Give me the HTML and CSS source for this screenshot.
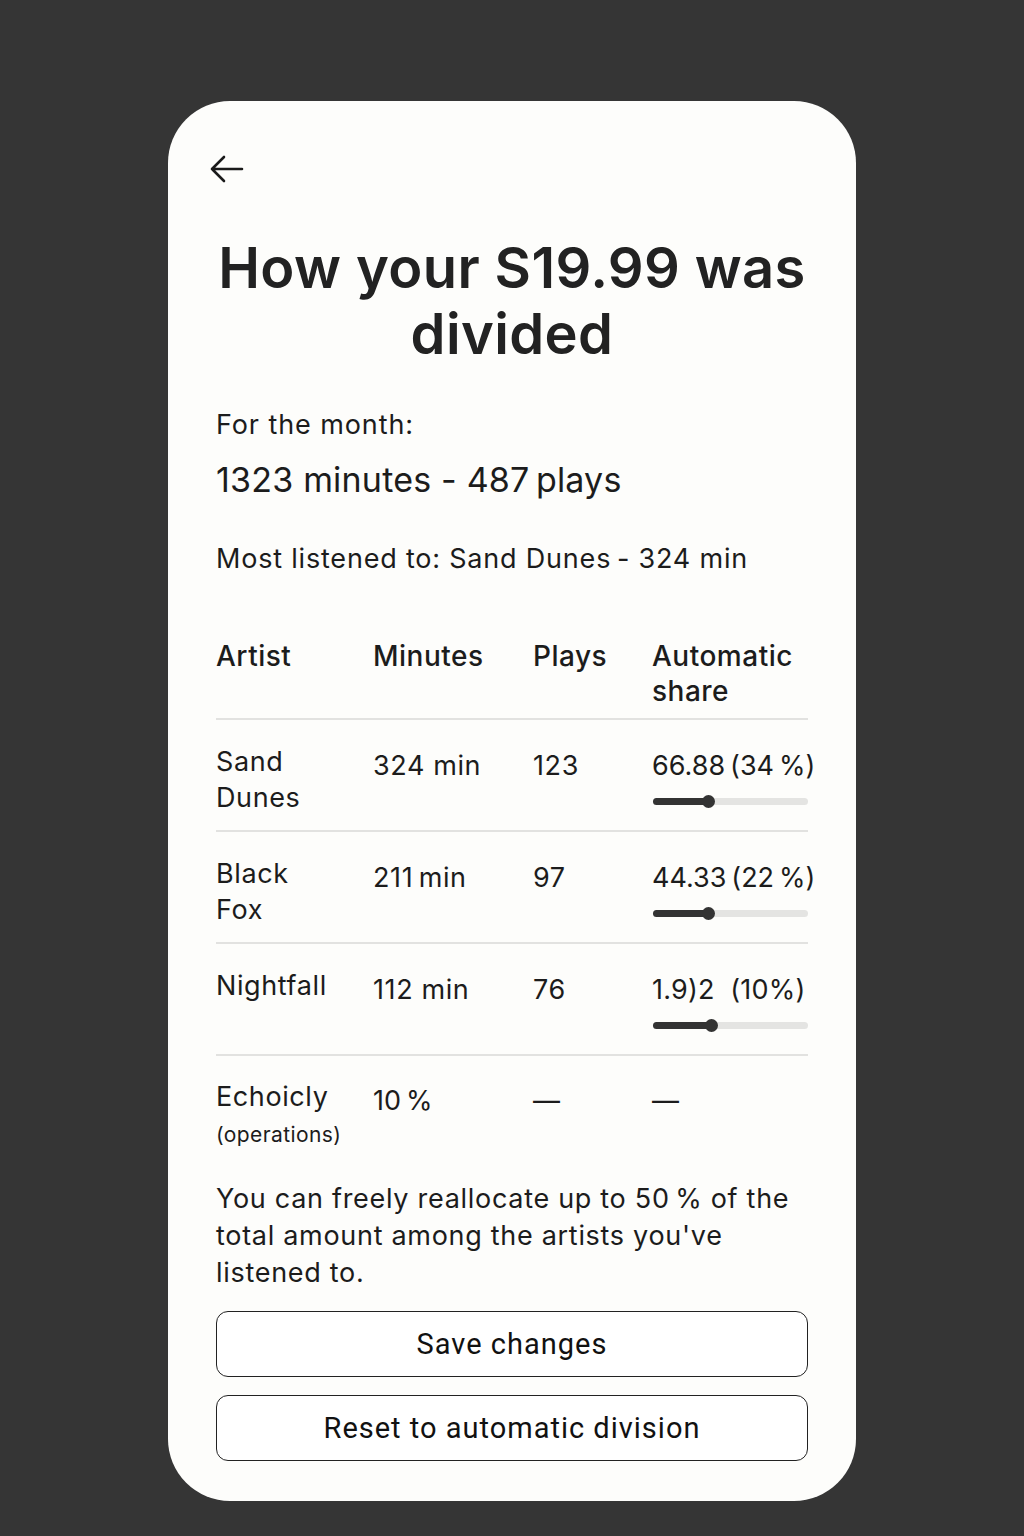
FILE: index.html
```html
<!DOCTYPE html>
<html lang="en">
<head>
<meta charset="utf-8">
<title>How your S19.99 was divided</title>
<link rel="stylesheet" href="styles.css">
</head>
<body>
<main class="card">
  <button class="back" aria-label="Back">
    <svg width="36" height="32" viewBox="0 0 36 32"><path d="M34 16H4M16 4L4 16l12 12" fill="none" stroke="#1a1a1a" stroke-width="2.6" stroke-linecap="round" stroke-linejoin="round"/></svg>
  </button>
  <h1 class="title">How your S19.99 was divided</h1>
  <p class="label">For the month:</p>
  <p class="totals">1323 minutes - 487&#8239;plays</p>
  <p class="most">Most listened to: Sand Dunes&#8239;- 324 min</p>

  <div class="table">
    <div class="row head">
      <div>Artist</div><div>Minutes</div><div>Plays</div><div>Automatic share</div>
    </div>
    <div class="row">
      <div class="name">Sand<br>Dunes</div>
      <div class="val">324 min</div>
      <div class="val">123</div>
      <div class="share">
        <div class="val tight">66.88&#8239;(34&#8239;%)</div>
        <div class="slider"><div class="fill" style="width:55px"></div><div class="thumb" style="left:55px"></div></div>
      </div>
    </div>
    <div class="row">
      <div class="name">Black<br>Fox</div>
      <div class="val">211&#8239;min</div>
      <div class="val">97</div>
      <div class="share">
        <div class="val tight">44.33&#8239;(22&#8239;%)</div>
        <div class="slider"><div class="fill" style="width:55px"></div><div class="thumb" style="left:55px"></div></div>
      </div>
    </div>
    <div class="row">
      <div class="name">Nightfall</div>
      <div class="val">112 min</div>
      <div class="val">76</div>
      <div class="share">
        <div class="val tight">1.9)2&nbsp; (10%)</div>
        <div class="slider"><div class="fill" style="width:58px"></div><div class="thumb" style="left:58px"></div></div>
      </div>
    </div>
    <div class="row last">
      <div class="name">Echoicly<br><span class="sub">(operations)</span></div>
      <div class="val">10&#8239;%</div>
      <div class="val">—</div>
      <div class="val">—</div>
    </div>
  </div>

  <p class="note">You can freely reallocate up to 50&#8239;% of the total amount among the artists you've listened to.</p>

  <div class="actions">
    <button class="btn">Save changes</button>
    <button class="btn">Reset to automatic division</button>
  </div>
</main>
</body>
</html>
```

FILE: styles.css
```css
* { box-sizing: border-box; }
html, body { margin: 0; padding: 0; }
body {
  background: #353535;
  width: 1024px;
  height: 1536px;
  font-family: Inter, "Noto Sans", sans-serif;
  color: #1c1c1c;
  overflow: hidden;
}
.card {
  width: 688px;
  height: 1400px;
  margin: 101px auto 0;
  background: #fdfdfb;
  border-radius: 62px;
  padding: 52px 48px 40px;
  display: flex;
  flex-direction: column;
}
.back {
  border: 0;
  background: none;
  padding: 0;
  margin-left: -8px;
  width: 36px;
  height: 32px;
  display: block;
}
.title {
  margin: 50px 0 0;
  text-align: center;
  font-size: 56px;
  line-height: 66px;
  font-weight: 600;
  letter-spacing: 0.4px;
  color: #222;
}
.label {
  margin: 41px 0 0;
  font-size: 27px;
  line-height: 34px;
  letter-spacing: 0.9px;
}
.totals {
  margin: 18px 0 0;
  font-size: 34px;
  line-height: 40px;
  letter-spacing: 0.2px;
}
.most {
  margin: 42px 0 0;
  font-size: 27px;
  line-height: 34px;
  letter-spacing: 0.8px;
}
.table { margin-top: 63px; }
.row {
  display: grid;
  grid-template-columns: 157px 160px 119px 156px;
  border-bottom: 2px solid #e2e2e0;
  height: 112px;
  padding-top: 24px;
  font-size: 27px;
  line-height: 36px;
  letter-spacing: 0.6px;
}
.row.head {
  height: auto;
  padding: 0 0 9px;
  font-size: 28px;
  font-weight: 500;
  line-height: 35px;
  letter-spacing: 0.5px;
}
.row.last { border-bottom: 0; height: auto; padding-top: 23px; }
.val { padding-top: 4px; white-space: nowrap; }
.val.tight { letter-spacing: 0.2px; }
.sub { font-size: 21px; line-height: 28px; letter-spacing: 0.4px; }
.slider {
  position: relative;
  height: 7px;
  width: 155px;
  margin: 14px 0 0 1px;
  background: #e4e4e2;
  border-radius: 4px;
}
.fill {
  position: absolute;
  left: 0; top: 0; bottom: 0;
  background: #333;
  border-radius: 4px;
}
.thumb {
  position: absolute;
  top: 50%;
  width: 13px;
  height: 13px;
  margin: -6.5px 0 0 -6.5px;
  border-radius: 50%;
  background: #333;
}
.note {
  margin: 29px 0 0;
  font-size: 27px;
  line-height: 37px;
  letter-spacing: 0.7px;
}
.actions {
  margin-top: 20px;
  display: flex;
  flex-direction: column;
  gap: 18px;
}
.btn {
  height: 66px;
  border: 1.5px solid #222;
  border-radius: 12px;
  background: #fff;
  font-family: Roboto, "Noto Sans", sans-serif;
  font-size: 29px;
  font-weight: 400;
  letter-spacing: 1px;
  color: #111;
}
```
